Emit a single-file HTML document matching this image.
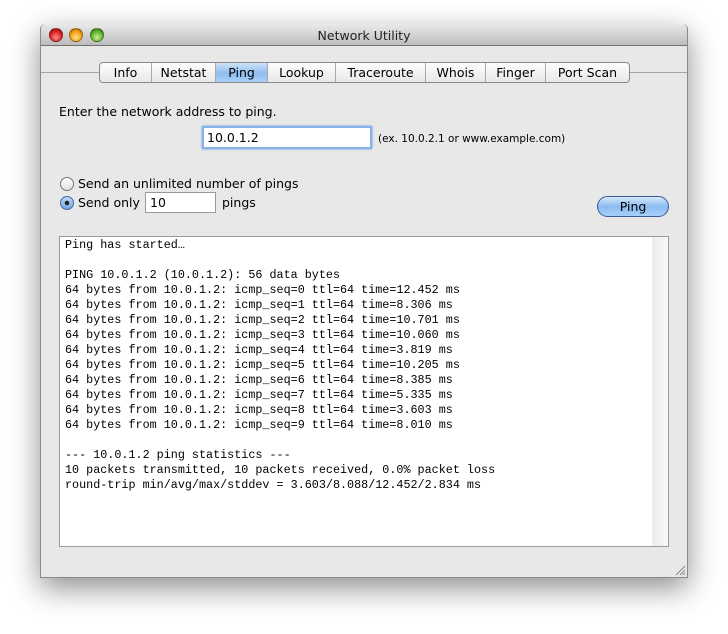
<!DOCTYPE html>
<html><head><style>
*{margin:0;padding:0;box-sizing:border-box}
body{width:728px;height:634px;background:#fff;position:relative;overflow:hidden;font-family:"DejaVu Sans",sans-serif;font-size:12.5px;color:#000}
.win{position:absolute;left:40px;top:24px;width:648px;height:554px;background:#e8e8e8;border:1px solid #8a8a8a;border-top:none;border-radius:5px 5px 0 0;box-shadow:0 10px 30px rgba(0,0,0,.45)}
.tb{position:absolute;left:0;top:0;width:646px;height:22px;background:linear-gradient(#e9e9e9,#bdbdbd);border-bottom:1px solid #707070;border-radius:5px 5px 0 0;text-align:center;line-height:23px;font-size:12.5px;color:#222}
.dot{position:absolute;top:4px;width:14px;height:14px;border-radius:50%;border:1px solid rgba(0,0,0,.35)}
.a{position:absolute;font-size:12.5px}
.hl{position:absolute;left:0;width:646px;top:48px;height:1px;background:#a5a5a5}
.tabs{position:absolute;left:58px;top:38px;height:21px;display:flex;border:1px solid #8a8a8a;border-radius:4px;background:linear-gradient(#fdfdfd,#e8e8e8);overflow:hidden}
.tabs div{border-left:1px solid #a8a8a8;text-align:center;line-height:19px;font-size:12.5px}
.tabs div:first-child{border-left:none}
.tabs .on{background:linear-gradient(#cfe2f8,#8fbdf0 55%,#a9d0f9)}
.inp{position:absolute;background:#fff;border:1px solid #999;font-size:12.5px}
.txt{position:absolute;left:18px;top:212px;width:610px;height:311px;background:#fff;border:1px solid #9a9a9a;font-family:"Liberation Mono","DejaVu Sans Mono",monospace;font-size:11.75px;line-height:15px;padding:1px 5px 0;white-space:pre}
.sb{position:absolute;right:0;top:0;width:16px;height:309px;background:linear-gradient(90deg,#ececec,#f8f8f8)}
</style></head><body>
<div class="win">
<div class="tb">Network Utility
<div class="dot" style="left:8px;background:radial-gradient(circle at 50% 70%,#ff8a80,#d42020 60%,#8c0c0c)"></div>
<div class="dot" style="left:28px;background:radial-gradient(circle at 50% 70%,#ffe080,#f09a12 60%,#a85a00)"></div>
<div class="dot" style="left:49px;background:radial-gradient(circle at 50% 70%,#c8f08a,#5cae2a 60%,#2e6a10)"></div>
</div>
<div class="hl"></div>
<div class="tabs">
<div style="width:51px">Info</div><div style="width:64px">Netstat</div><div class="on" style="width:52px">Ping</div><div style="width:68px">Lookup</div><div style="width:90px">Traceroute</div><div style="width:60px">Whois</div><div style="width:60px">Finger</div><div style="width:84px">Port Scan</div>
</div>
<div class="a" style="left:18px;top:80px">Enter the network address to ping.</div>
<div class="inp" style="left:161px;top:102px;width:170px;height:23px;border:2px solid #86b2e8;box-shadow:0 0 2px #5a94e0;padding:2px 3px">10.0.1.2</div>
<div class="a" style="left:337px;top:109px;font-size:10.5px">(ex. 10.0.2.1 or www.example.com)</div>
<div style="position:absolute;left:19px;top:153px;width:14px;height:14px;border-radius:50%;border:1px solid #777;background:linear-gradient(#fff,#ddd)"></div>
<div class="a" style="left:37px;top:152px">Send an unlimited number of pings</div>
<div style="position:absolute;left:19px;top:172px;width:14px;height:14px;border-radius:50%;border:1px solid #4a6a9a;background:radial-gradient(circle,#222 0 2px,transparent 2.5px),linear-gradient(#bcd8f8,#6fa6e8)"></div>
<div class="a" style="left:37px;top:171px">Send only</div>
<div class="inp" style="left:104px;top:168px;width:71px;height:21px;padding:2px 4px">10</div>
<div class="a" style="left:181px;top:171px">pings</div>
<div style="position:absolute;left:556px;top:172px;width:72px;height:21px;border-radius:11px;border:1px solid #3a5a9a;background:linear-gradient(#d6e8fb,#8bbcf0 50%,#a6d0fa);text-align:center;line-height:19px;font-size:12.5px">Ping</div>
<div class="txt">Ping has started…

PING 10.0.1.2 (10.0.1.2): 56 data bytes
64 bytes from 10.0.1.2: icmp_seq=0 ttl=64 time=12.452 ms
64 bytes from 10.0.1.2: icmp_seq=1 ttl=64 time=8.306 ms
64 bytes from 10.0.1.2: icmp_seq=2 ttl=64 time=10.701 ms
64 bytes from 10.0.1.2: icmp_seq=3 ttl=64 time=10.060 ms
64 bytes from 10.0.1.2: icmp_seq=4 ttl=64 time=3.819 ms
64 bytes from 10.0.1.2: icmp_seq=5 ttl=64 time=10.205 ms
64 bytes from 10.0.1.2: icmp_seq=6 ttl=64 time=8.385 ms
64 bytes from 10.0.1.2: icmp_seq=7 ttl=64 time=5.335 ms
64 bytes from 10.0.1.2: icmp_seq=8 ttl=64 time=3.603 ms
64 bytes from 10.0.1.2: icmp_seq=9 ttl=64 time=8.010 ms

--- 10.0.1.2 ping statistics ---
10 packets transmitted, 10 packets received, 0.0% packet loss
round-trip min/avg/max/stddev = 3.603/8.088/12.452/2.834 ms<div class="sb"></div></div>
<svg style="position:absolute;right:1px;bottom:1px" width="12" height="12"><path d="M11 2L2 11M11 6L6 11M11 9L9 11" stroke="#888" stroke-width="1"/></svg>
</div>
</body></html>
